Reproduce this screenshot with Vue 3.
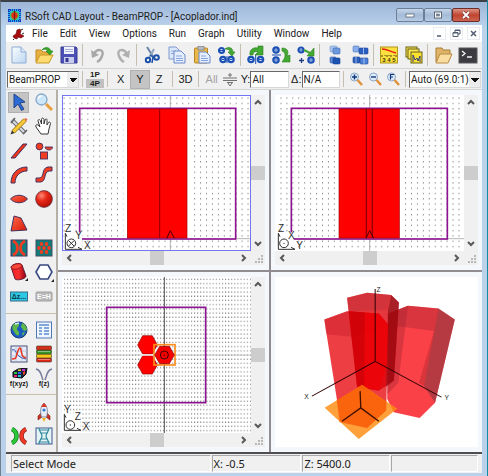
<script setup>
import { ref } from 'vue';

let menus = ref(['File', 'Edit', 'View', 'Options', 'Run', 'Graph', 'Utility', 'Window', 'Help']);

let toolGroups = ref([
    ['new', 'open', 'save'],
    ['undo', 'redo'],
    ['cut', 'copy', 'paste', 'duplicate'],
    ['rotate', 'swap', 'move'],
    ['group', 'ungroup'],
    ['ruler', 'plots'],
    ['folder', 'console'],
]);

let paletteGroups = ref([
    ['select', 'magnify', 'edit', 'hand', 'segment', 'shapes', 'arc', 'sbend', 'lens', 'sphere', 'polygon', '', 'coupler', 'array', 'cylinder', 'hexagon', 'delta', 'eh'],
    ['globe', 'table', 'monitor', 'layers', 'fxyz', 'fz'],
    ['', 'rocket', 'bend', 'grating'],
]);

// lettering drawn on top of some icons
let iconText = {
    ruler: { text: '3 4 5', y: 17, size: 6, fill: '#403808' },
    delta: { text: 'Δz...', y: 13, size: 7, fill: '#103848' },
    eh: { text: 'E=H', y: 13, size: 7, fill: '#ffffff' },
    fxyz: { text: 'f(xyz)', y: 18, size: 7, fill: '#181818' },
    fz: { text: 'f(z)', y: 18, size: 7, fill: '#181818' },
};

let activeTool = ref('select');
let plane = ref('Y');
let program = ref('BeamPROP');
let scale = ref('Auto (69.0:1)');
let cut = ref('All');
let delta = ref('N/A');

let status = ref(['Select Mode', 'X: -0.5', 'Z: 5400.0', '']);
</script>

<template>
    <div class="window">
        <!-- icon sprite -->
        <svg class="sprite" aria-hidden="true">
            <defs>
                <linearGradient id="redGrad" x1="0" y1="0" x2="1" y2="1">
                    <stop offset="0" stop-color="#ff6a4a" />
                    <stop offset="1" stop-color="#d81808" />
                </linearGradient>
                <radialGradient id="ballGrad" cx=".35" cy=".3" r=".8">
                    <stop offset="0" stop-color="#ff8a78" />
                    <stop offset=".4" stop-color="#e82818" />
                    <stop offset="1" stop-color="#a80800" />
                </radialGradient>
                <linearGradient id="pageGrad" x1="0" y1="0" x2="1" y2="1">
                    <stop offset="0" stop-color="#fafdff" />
                    <stop offset="1" stop-color="#bcd6f2" />
                </linearGradient>
                <linearGradient id="cylGrad" x1="0" y1="0" x2="1" y2="0">
                    <stop offset="0" stop-color="#f02020" />
                    <stop offset=".5" stop-color="#f83030" />
                    <stop offset="1" stop-color="#900010" />
                </linearGradient>
                <pattern id="dotsA" x="-7" y="1" width="17.8" height="15.9" patternUnits="userSpaceOnUse">
                    <rect x="0" y="6" width="3" height="3" fill="#5c5c5c" />
                </pattern>
                <pattern id="dotsB" x="-4" y="0" width="9.3" height="12.6" patternUnits="userSpaceOnUse">
                    <rect x="0" y="4" width="3" height="3" fill="#5c5c5c" />
                </pattern>
            </defs>

            <symbol id="i-new" viewBox="0 0 20 20">
                <path d="M3 2h9l5 5v11H3z" fill="url(#pageGrad)" stroke="#90acd4" />
                <path d="M12 2v5h5" fill="#dbe9f8" stroke="#90acd4" />
            </symbol>
            <symbol id="i-open" viewBox="0 0 20 20">
                <path d="M2 17V5h5l2 2h6v3" fill="#e8b040" stroke="#c08a20" />
                <path d="M2 18l4-8h13l-4 8z" fill="#fcdc70" stroke="#c89828" />
                <path d="M8 5c2-3 7-4 9 1h2l-3 4-4-4h2c-1-2-4-2-6-1z" fill="#38a828" stroke="#1c7c18" stroke-width=".6" />
            </symbol>
            <symbol id="i-save" viewBox="0 0 20 20">
                <path d="M2 2h15l1 1v15H2z" fill="#4c50b4" stroke="#383c94" />
                <rect x="5" y="2" width="10" height="7" fill="#f0f2fc" />
                <path d="M6 4.500h8M6 6.500h8" stroke="#a8acd8" />
                <rect x="5" y="12" width="10" height="6" fill="#c8ccec" />
                <rect x="6.500" y="13" width="3" height="4" fill="#34388c" />
            </symbol>
            <symbol id="i-undo" viewBox="0 0 20 20">
                <path d="M6 9c3-6 11-5 8 2-1 3-3 5-5 6" fill="none" stroke="#a8a8a8" stroke-width="2.400" />
                <path d="M3 5l1 8 7-3z" fill="#a8a8a8" />
            </symbol>
            <symbol id="i-redo" viewBox="0 0 20 20">
                <path d="M14 9c-3-6-11-5-8 2 1 3 3 5 5 6" fill="none" stroke="#b0b0b0" stroke-width="2.400" />
                <path d="M17 5l-1 8-7-3z" fill="#b0b0b0" />
            </symbol>
            <symbol id="i-cut" viewBox="0 0 20 20">
                <path d="M5 2l7 11" stroke="#6c84a8" stroke-width="2" />
                <path d="M12 4L7 13" stroke="#90a4c0" stroke-width="2" />
                <circle cx="6" cy="15" r="2.200" fill="none" stroke="#1c50a8" stroke-width="2" />
                <circle cx="14.500" cy="12.500" r="2.300" fill="none" stroke="#1c50a8" stroke-width="2" />
                <path d="M8 10l3 2-1 6" stroke="#1c50a8" stroke-width="1.500" fill="none" />
            </symbol>
            <symbol id="i-copy" viewBox="0 0 20 20">
                <path d="M2 2h7l3 3v9H2z" fill="#dce8fa" stroke="#7c98d0" />
                <path d="M4 6h5M4 8.500h5" stroke="#90acdc" />
                <path d="M7 6h7l4 4v8H7z" fill="#e4eefc" stroke="#6c88c8" />
                <path d="M9 11h6M9 13.500h7M9 15.500h7" stroke="#88a4dc" />
            </symbol>
            <symbol id="i-paste" viewBox="0 0 20 20">
                <rect x="2.500" y="3" width="13" height="15" rx="1" fill="#e8b84c" stroke="#b88420" />
                <rect x="6" y="1.500" width="6" height="3.500" fill="#b8bcc4" stroke="#7c8088" stroke-width=".7" />
                <path d="M7 7h7l4 4v7H7z" fill="#e4eefc" stroke="#6c88c8" />
                <path d="M9 11h5M9 13.500h7M9 15.500h7" stroke="#88a4dc" />
            </symbol>
            <symbol id="i-duplicate" viewBox="0 0 20 20">
                <g fill="#dce8fa" stroke="#1c50b4" stroke-width="2.200">
                    <circle cx="4.500" cy="5.500" r="2.500" />
                    <circle cx="6" cy="14.500" r="2.700" />
                    <circle cx="14" cy="14.500" r="2.700" />
                </g>
                <path d="M3 5.500h3M4.500 14.500h3M12.500 14.500h3M10 11v7" stroke="#1c50b4" />
                <path d="M8 4c4-3 8-1 8 3h2l-3 4-4-4h2c0-2-2-3-5-3z" fill="#44a834" stroke="#28801c" stroke-width=".6" />
            </symbol>
            <symbol id="i-rotate" viewBox="0 0 20 20">
                <g fill="#dce8fa" stroke="#1c50b4" stroke-width="2.200">
                    <circle cx="5" cy="14.500" r="2.700" />
                    <circle cx="14.500" cy="14.500" r="2.700" />
                </g>
                <path d="M9.700 10v9M3.500 14.500h3M13 14.500h3" stroke="#1c50b4" />
                <path d="M4 10c-1-6 4-8 8-7V1h5v9h-8l3-3c-3-1-5 0-5 3z" fill="#44a834" stroke="#28801c" stroke-width=".6" />
            </symbol>
            <symbol id="i-swap" viewBox="0 0 20 20">
                <g fill="#dce8fa" stroke="#1c50b4" stroke-width="2.200">
                    <circle cx="5" cy="5" r="2.700" />
                    <circle cx="5" cy="15" r="2.700" />
                </g>
                <path d="M1 10h9M3.500 5h3M3.500 15h3" stroke="#1c50b4" />
                <path d="M11 3c6 0 7 4 5 8l3-1v7h-8l2-3c2-4 1-7-2-8z" fill="#44a834" stroke="#28801c" stroke-width=".6" />
            </symbol>
            <symbol id="i-move" viewBox="0 0 20 20">
                <g fill="#dce8fa" stroke="#1c50b4" stroke-width="2.200">
                    <circle cx="5" cy="5" r="2.500" />
                    <circle cx="15" cy="15" r="2.700" />
                </g>
                <path d="M3.500 5h3M13.500 15h3" stroke="#1c50b4" />
                <path d="M3 15.500h5M5.500 13v5" stroke="#203c80" stroke-width="1.300" />
                <path d="M8 5l6 3" stroke="#44a834" stroke-width="2" />
                <path d="M18 3v8h-7z" fill="#44a834" stroke="#28801c" stroke-width=".6" />
            </symbol>
            <symbol id="i-group" viewBox="0 0 20 20">
                <rect x="5" y="1" width="7" height="6" rx="1" fill="#a8c4ec" stroke="#7898cc" stroke-width=".6" />
                <rect x="8" y="3" width="7" height="6" rx="1" fill="#6c98dc" stroke="#3c68b4" stroke-width=".6" />
                <rect x="5" y="12" width="6" height="6" rx="1" fill="#5c88d4" stroke="#3460ac" stroke-width=".6" />
                <rect x="8" y="13" width="7" height="6" rx="1" fill="#1c54b4" stroke="#103c8c" stroke-width=".6" />
            </symbol>
            <symbol id="i-ungroup" viewBox="0 0 20 20">
                <rect x="3" y="1" width="6" height="6" rx="1" fill="#88acec" stroke="#5078bc" stroke-width=".6" />
                <rect x="9" y="3" width="9" height="6" rx="1" fill="#2c60c0" stroke="#1c4494" stroke-width=".6" />
                <rect x="3" y="12" width="7" height="6" rx="1" fill="#2c60c0" stroke="#1c4494" stroke-width=".6" />
                <rect x="10" y="13" width="8" height="6" rx="1" fill="#4c80d8" stroke="#1c4494" stroke-width=".6" />
                <path d="M13.500 3v6M14 13v6M6 12v6" stroke="#c4d8f8" stroke-width=".7" />
            </symbol>
            <symbol id="i-ruler" viewBox="0 0 20 20">
                <rect x="1.500" y="2" width="17" height="16" fill="#fce040" stroke="#b09818" />
                <path d="M3 4c6 0 8 3 14 4" stroke="#e82010" stroke-width="1.500" fill="none" />
                <path d="M3 10v2M6 10v1M8 10v2M10 10v1M12 10v2M15 10v1M17 10v2" stroke="#504810" />
            </symbol>
            <symbol id="i-plots" viewBox="0 0 20 20">
                <g stroke="#686010">
                    <rect x="2" y="2" width="11" height="10" fill="#fce858" />
                    <rect x="4" y="4" width="11" height="10" fill="#fce858" />
                    <rect x="7" y="7" width="11" height="11" fill="#fce030" />
                </g>
                <path d="M9 17v-7l2 5 2-2 1 3 2-5v6" fill="none" stroke="#303c80" />
            </symbol>
            <symbol id="i-folder" viewBox="0 0 20 20">
                <path d="M3 17V3h6l1 2h7v5" fill="#e0b468" stroke="#a87c34" />
                <path d="M3 18l4-9h12l-4 9z" fill="#f8dca0" stroke="#b88c44" />
            </symbol>
            <symbol id="i-console" viewBox="0 0 20 20">
                <rect x="1" y="3" width="18" height="15" fill="#3c3c40" stroke="#58585c" />
                <path d="M4 6l3 2.500-3 2.500M9 12h5" fill="none" stroke="#f4f4f4" stroke-width="1.300" />
            </symbol>

            <symbol id="i-zoomin" viewBox="0 0 14 14">
                <circle cx="5.500" cy="5" r="4" fill="#dcecfc" stroke="#8ca4c4" />
                <path d="M8.500 8l4.500 5" stroke="#e09038" stroke-width="2.400" />
                <path d="M3 5h5M5.500 2.500v5" stroke="#103878" stroke-width="1.400" />
            </symbol>
            <symbol id="i-zoomout" viewBox="0 0 14 14">
                <circle cx="5.500" cy="5" r="4" fill="#dcecfc" stroke="#8ca4c4" />
                <path d="M8.500 8l4.500 5" stroke="#e09038" stroke-width="2.400" />
                <path d="M3 5h5" stroke="#103878" stroke-width="1.400" />
            </symbol>
            <symbol id="i-zoomfit" viewBox="0 0 14 14">
                <circle cx="5.500" cy="5" r="4" fill="#dcecfc" stroke="#8ca4c4" />
                <path d="M8.500 8l4.500 5" stroke="#e09038" stroke-width="2.400" />
                <path d="M4.500 7.500v-5H8M4.500 5H7" stroke="#103878" fill="none" stroke-width="1.200" />
            </symbol>

            <symbol id="i-select" viewBox="0 0 20 20">
                <path d="M5 2l11 8-5 1 4 6-2.500 1.500L9 12l-4 4z" fill="#2c6cd4" stroke="#1c3c84" stroke-width=".9" />
            </symbol>
            <symbol id="i-magnify" viewBox="0 0 20 20">
                <circle cx="7.500" cy="7.500" r="5.500" fill="#cce6fa" stroke="#88a8c8" stroke-width="1.300" />
                <path d="M4.500 7c0-2 1-3 3-3" fill="none" stroke="#fff" stroke-width="1.300" />
                <path d="M12 12l6 6" stroke="#e8a040" stroke-width="3" />
            </symbol>
            <symbol id="i-edit" viewBox="0 0 20 20">
                <path d="M3 4l13 13" stroke="#606468" stroke-width="4" />
                <path d="M3 4l13 13" stroke="#d4d8dc" stroke-width="2.400" />
                <path d="M2 7l4-5M14 18l4-4" stroke="#606468" stroke-width="1.600" />
                <path d="M4 16L16 4" stroke="#a07010" stroke-width="4.400" />
                <path d="M4 16L16 4" stroke="#f8cc38" stroke-width="3" />
                <path d="M1.500 18.500l1.500-4 2.500 2.500z" fill="#303030" />
                <path d="M15 3l2-1 1.500 1.500L17 5.500z" fill="#e07050" />
            </symbol>
            <symbol id="i-hand" viewBox="0 0 20 20">
                <path d="M7 18l-5-7c-1-2 1-3 2-2l2 2-2-6c0-2 2-2 2.500 0l1 3V3.500c0-2 2-2 2.500 0V8l1-4c.500-2 2.500-1 2 .500V9l1.500-2.500c1-1 2 0 2 1L15 13l-1 5z" fill="#fff" stroke="#383838" />
            </symbol>
            <symbol id="i-segment" viewBox="0 0 20 20">
                <path d="M2 17L14 3h4L6 17z" fill="#f03418" stroke="#443060" />
            </symbol>
            <symbol id="i-shapes" viewBox="0 0 20 20">
                <g fill="#f03c20" stroke="#443060" stroke-width=".9">
                    <circle cx="5.500" cy="5.500" r="3.400" />
                    <path d="M11 6h7.500c0 4-7 4-7.500 0z" />
                    <rect x="6.500" y="11" width="7" height="7" />
                </g>
            </symbol>
            <symbol id="i-arc" viewBox="0 0 20 20">
                <path d="M2 18C2 9 8 2 18 2v4C11 6 6 11 6 18z" fill="#f03c20" stroke="#443060" />
            </symbol>
            <symbol id="i-sbend" viewBox="0 0 20 20">
                <path d="M2 13h3c6 0 2-10 9-11h4v4h-3c-6 1-2 11-9 11H2z" fill="#f03c20" stroke="#443060" />
            </symbol>
            <symbol id="i-lens" viewBox="0 0 20 20">
                <path d="M1.500 10C6 5 14 5 18.500 10 14 15 6 15 1.500 10z" fill="url(#redGrad)" stroke="#443060" />
            </symbol>
            <symbol id="i-sphere" viewBox="0 0 20 20">
                <circle cx="10" cy="10" r="8.400" fill="url(#ballGrad)" stroke="#503040" stroke-width=".7" />
            </symbol>
            <symbol id="i-polygon" viewBox="0 0 20 20">
                <path d="M2 17L5 2l7 2 6 12z" fill="url(#redGrad)" stroke="#443060" />
            </symbol>
            <symbol id="i-coupler" viewBox="0 0 20 20">
                <rect x="2" y="2" width="16" height="16" fill="#0c7c7c" stroke="#443060" />
                <path d="M4 3c6 3 6 11 0 14M16 3c-6 3-6 11 0 14" fill="none" stroke="#f03c20" stroke-width="2.800" />
            </symbol>
            <symbol id="i-array" viewBox="0 0 20 20">
                <rect x="2" y="2" width="16" height="16" fill="#0c7c7c" stroke="#445060" />
                <g fill="#f03c20">
                    <circle cx="7.500" cy="6" r="1.900" /><circle cx="12.500" cy="6" r="1.900" />
                    <circle cx="5" cy="10" r="1.900" /><circle cx="10" cy="10" r="1.900" /><circle cx="15" cy="10" r="1.900" />
                    <circle cx="7.500" cy="14" r="1.900" /><circle cx="12.500" cy="14" r="1.900" />
                </g>
            </symbol>
            <symbol id="i-cylinder" viewBox="0 0 20 20">
                <path d="M2 5c1-3 9-5 11-2l4 11c0 3-9 5-11 3z" fill="url(#cylGrad)" stroke="#501830" stroke-width=".9" />
                <ellipse cx="7.500" cy="4.500" rx="5.500" ry="2.500" transform="rotate(-14 7.500 4.500)" fill="#f84838" stroke="#901020" stroke-width=".7" />
                <path d="M19 16v3h-3z" fill="#202020" />
            </symbol>
            <symbol id="i-hexagon" viewBox="0 0 20 20">
                <path d="M2 10l4-7h8l4 7-4 7H6z" fill="#fff" stroke="#384880" stroke-width="1.600" />
                <path d="M20 17v3h-3z" fill="#202020" />
            </symbol>
            <symbol id="i-delta" viewBox="0 0 20 20">
                <rect x="1.500" y="6" width="17" height="9" fill="#2cc8e4" stroke="#386c88" />
            </symbol>
            <symbol id="i-eh" viewBox="0 0 20 20">
                <rect x="2" y="6" width="16" height="9" rx="1" fill="#b8b8b8" stroke="#a0a0a0" />
            </symbol>
            <symbol id="i-globe" viewBox="0 0 20 20">
                <circle cx="10" cy="10" r="8" fill="#1c5cc0" stroke="#183c78" />
                <path d="M4 5c3-3 6-2 6 0s-2 2-2 4 3 2 2 5-3 1-4-1-4-4-2-8zM13 3c3 1 5 4 5 7l-3 1-3-4zM13 13l3-1-2 4z" fill="#60b848" />
                <path d="M6 4l4-1" stroke="#d8ecfc" stroke-width="1.300" />
            </symbol>
            <symbol id="i-table" viewBox="0 0 20 20">
                <rect x="2.500" y="2" width="15" height="16" fill="#f0f6fe" stroke="#5078b8" />
                <path d="M5 5h10M5 8h3M5 11h3M5 14h3M10 8h5M10 11h5M10 14h5" stroke="#5c8cd0" stroke-width="1.300" />
            </symbol>
            <symbol id="i-monitor" viewBox="0 0 20 20">
                <rect x="2" y="2" width="16" height="16" fill="#e8ecf8" stroke="#485078" />
                <path d="M2 7h16M2 12h16M7 2v16M13 2v16" stroke="#b0b8d0" stroke-width=".7" />
                <path d="M3 6c2-1 3 0 4 2s3 6 10 7" fill="none" stroke="#3058b8" />
                <path d="M3 15c4 0 4-1 5-5s3-9 4-4 1 7 5 8" fill="none" stroke="#e83820" stroke-width="1.500" />
            </symbol>
            <symbol id="i-layers" viewBox="0 0 20 20">
                <g stroke="#383828" stroke-width=".6">
                    <rect x="2.500" y="14" width="15" height="4" rx="1" fill="#e02818" />
                    <rect x="2.500" y="10" width="15" height="4" rx="1" fill="#f8c818" />
                    <rect x="2.500" y="6" width="15" height="4" rx="1" fill="#389828" />
                    <rect x="2.500" y="2" width="15" height="4" rx="1" fill="#d83018" />
                </g>
                <path d="M4 7.500h12M4 15.500h12" stroke="#fff" stroke-opacity=".4" />
            </symbol>
            <symbol id="i-fxyz" viewBox="0 0 20 20">
                <path d="M4 4l5-3 9-1-1 6-4 4-9-1z" fill="#182038" stroke="#101018" />
                <path d="M5 4h3v2H5z" fill="#30c040" /><path d="M9 4h3v2H9z" fill="#3060f0" />
                <path d="M5 7h3v2H5z" fill="#e82870" /><path d="M9 7h3v2H9z" fill="#28c8c8" />
                <path d="M9 1.500h3V3H9z" fill="#f0d820" /><path d="M13 1h3v2h-3z" fill="#d030d0" /><path d="M14 4l2-1v3l-2 1z" fill="#f04020" />
            </symbol>
            <symbol id="i-fz" viewBox="0 0 20 20">
                <path d="M2 1c5 1 5 6 7 11M18 1c-5 1-5 6-7 11" fill="none" stroke="#787c9c" stroke-width="1.500" />
            </symbol>
            <symbol id="i-rocket" viewBox="0 0 20 20">
                <path d="M7 11l-3 3v4l4-3zM13 11l3 3v4l-4-3z" fill="#d83020" stroke="#702018" stroke-width=".6" />
                <path d="M10 1c4 4 4 9 2.500 14h-5C6 10 6 5 10 1z" fill="#e8eef6" stroke="#707890" stroke-width=".8" />
                <path d="M10 1c1.500 1.500 2.500 3 2.800 4H7.200C7.500 4 8.500 2.500 10 1z" fill="#d83828" />
                <circle cx="10" cy="8" r="1.600" fill="#3878d0" />
                <path d="M8 16h4l-2 4z" fill="#f8b020" />
            </symbol>
            <symbol id="i-bend" viewBox="0 0 20 20">
                <path d="M3 3c6 3 6 11 0 14" fill="none" stroke="#186818" stroke-width="4.500" />
                <path d="M3 3c6 3 6 11 0 14" fill="none" stroke="#28c838" stroke-width="3.200" />
                <path d="M17 3c-6 3-6 11 0 14" fill="none" stroke="#802018" stroke-width="4.500" />
                <path d="M17 3c-6 3-6 11 0 14" fill="none" stroke="#f03828" stroke-width="3.200" />
            </symbol>
            <symbol id="i-grating" viewBox="0 0 20 20">
                <rect x="2" y="2" width="16" height="16" fill="#e4f4f4" stroke="#405890" />
                <path d="M5 2c0 4 3 5 3 8s-3 4-3 8M15 2c0 4-3 5-3 8s3 4 3 8M5 4h10M7 7h6M7 13h6M5 16h10" fill="none" stroke="#30889c" stroke-width="1.200" />
            </symbol>
        </svg>

        <header class="title-bar">
            <svg class="app-icon" viewBox="0 0 13 13">
                <rect width="13" height="13" fill="#28b8e8" />
                <path d="M0 1h13M0 12h13M1 0v13M12 0v13" stroke="#1838c0" stroke-width="2" stroke-dasharray="1 1" />
                <circle cx="6.500" cy="6.500" r="4.500" fill="#48c850" />
                <circle cx="6.500" cy="6.500" r="3.200" fill="#e83018" />
                <path d="M6.500 2v9" stroke="#802010" stroke-width="1.500" />
            </svg>
            <h1 class="title">RSoft CAD Layout - BeamPROP - [Acoplador.ind]</h1>
            <div class="window-buttons">
                <button class="win-btn" aria-label="Minimize">
                    <svg viewBox="0 0 10 8"><rect x="1" y="3" width="8" height="3" fill="#fff" stroke="#5c6878" stroke-width=".8" /></svg>
                </button>
                <button class="win-btn" aria-label="Restore">
                    <svg viewBox="0 0 10 8"><rect x="1.500" y="1" width="7" height="6" fill="#fff" stroke="#5c6878" /><rect x="3.500" y="3" width="3" height="2" fill="#8090a8" stroke="#5c6878" stroke-width=".6" /></svg>
                </button>
                <button class="win-btn close" aria-label="Close">
                    <svg viewBox="0 0 10 8"><path d="M2 1l6 6M8 1L2 7" stroke="#703030" stroke-width="3" /><path d="M2 1l6 6M8 1L2 7" stroke="#fff" stroke-width="1.800" /></svg>
                </button>
            </div>
        </header>

        <nav class="menu-bar">
            <svg class="doc-icon" viewBox="0 0 13 12">
                <path d="M1 8l3-2 1-4 3-1 1 2-1 3 4 2-3 2-3-1-1 2-3-1z" fill="#a80c10" stroke="#600408" stroke-width=".6" />
                <path d="M9 2l2-1M10 6l2-1M2 11l-1 1" stroke="#282828" />
            </svg>
            <button v-for="menu in menus" :key="menu" class="menu-item">{{ menu }}</button>
            <div class="mdi-buttons">
                <button aria-label="Minimize document"><svg viewBox="0 0 9 9"><path d="M2 7h4" stroke="#505c70" stroke-width="1.500" /></svg></button>
                <button aria-label="Restore document"><svg viewBox="0 0 9 9"><path d="M3 3V1h5v4H6M3 1.500h5M1 3.500h5v4H1zM1 4h5" fill="none" stroke="#505c70" /></svg></button>
                <button aria-label="Close document"><svg viewBox="0 0 9 9"><path d="M2 2l5 5M7 2L2 7" stroke="#505c70" stroke-width="1.500" /></svg></button>
            </div>
        </nav>

        <div class="toolbar">
            <div v-for="(group, i) in toolGroups" :key="i" class="tool-group">
                <button v-for="tool in group" :key="tool" class="tool" :aria-label="tool">
                    <svg>
                        <use :href="'#i-' + tool" />
                        <text v-if="iconText[tool]" class="icon-text" x="10" :y="iconText[tool].y" :font-size="iconText[tool].size" :fill="iconText[tool].fill">{{ iconText[tool].text }}</text>
                    </svg>
                </button>
            </div>
        </div>

        <div class="toolbar options-bar">
            <select v-model="program" class="program" aria-label="Program">
                <option>BeamPROP</option>
            </select>
            <i class="sep"></i>
            <button class="panes" aria-label="Panes"><span>1P</span><span class="on">4P</span></button>
            <i class="sep"></i>
            <button v-for="axis in ['X', 'Y', 'Z']" :key="axis" class="axis" :class="{ on: plane === axis }" @click="plane = axis">{{ axis }}</button>
            <i class="sep"></i>
            <button class="axis">3D</button>
            <i class="sep"></i>
            <button class="axis" disabled>All</button>
            <button class="nudge" aria-label="Step">
                <svg viewBox="0 0 14 16"><path d="M7 2v4M5 4h4M0 7h14M0 9.500h14M4 11.500h6M5 12l2 3 2-3" fill="none" stroke="#707070" /></svg>
            </button>
            <label for="cut">Y:</label>
            <input id="cut" v-model="cut" type="text" />
            <label for="delta">Δ:</label>
            <input id="delta" v-model="delta" type="text" />
            <i class="sep"></i>
            <button v-for="z in ['zoomin', 'zoomout', 'zoomfit']" :key="z" class="zoom" :aria-label="z">
                <svg><use :href="'#i-' + z" /></svg>
            </button>
            <i class="sep"></i>
            <select v-model="scale" class="scale" aria-label="Scale">
                <option>Auto (69.0:1)</option>
            </select>
        </div>

        <main class="workspace">
            <aside class="palette">
                <div v-for="(group, i) in paletteGroups" :key="i" class="palette-group" :style="{ flexGrow: group.length }">
                    <template v-for="(tool, j) in group" :key="j">
                        <button v-if="tool" class="pal" :class="{ on: activeTool === tool }" :aria-label="tool" @click="activeTool = tool">
                            <svg>
                                <use :href="'#i-' + tool" />
                                <text v-if="iconText[tool]" class="icon-text" x="10" :y="iconText[tool].y" :font-size="iconText[tool].size" :fill="iconText[tool].fill">{{ iconText[tool].text }}</text>
                            </svg>
                        </button>
                        <span v-else></span>
                    </template>
                </div>
            </aside>

            <div class="views">
                <section v-for="view in ['xz', 'yz', 'xy']" :key="view" class="pane">
                    <div class="canvas" :class="{ focused: view === 'xz' }">
                        <svg v-if="view === 'xz'" viewBox="9 15 561 468">
                            <rect x="0" y="0" width="600" height="500" fill="url(#dotsA)" />
                            <path d="M331 0v500M528 446h60" stroke="#909090" stroke-width="2" />
                            <rect x="190" y="57" width="201" height="388" fill="#fff" />
                            <rect x="59" y="55" width="468" height="392" fill="none" stroke="#8c1490" stroke-width="5" />
                            <rect x="202" y="57" width="179" height="387" fill="#fe0000" stroke="#a00000" stroke-width="2" />
                            <path d="M299 57v387" stroke="#900000" stroke-width="3" />
                            <path d="M320 445l11-23 12 23" fill="none" stroke="#500000" stroke-width="3" />
                            <rect x="12" y="427" width="54" height="53" fill="#fff" />
                            <path d="M16 430v48h50M16 430l5 10M66 478l-12-6" fill="none" stroke="#303030" stroke-width="3" />
                            <circle cx="34" cy="460" r="13" fill="#fff" stroke="#303030" stroke-width="3" />
                            <path d="M26 452l16 16M42 452l-16 16" stroke="#303030" stroke-width="3" />
                            <text class="axis-label" x="15" y="425">Z</text>
                            <text class="axis-label" x="46" y="447">Y</text>
                            <text class="axis-label" x="72" y="477">X</text>
                        </svg>
                        <svg v-else-if="view === 'yz'" viewBox="33 15 561 468">
                            <rect x="33" y="0" width="600" height="500" fill="url(#dotsA)" />
                            <path d="M314 0v500M548 446h60" stroke="#909090" stroke-width="2" />
                            <rect x="212" y="57" width="202" height="388" fill="#fff" />
                            <rect x="79" y="55" width="468" height="392" fill="none" stroke="#8c1490" stroke-width="5" />
                            <rect x="222" y="57" width="181" height="387" fill="#fe0000" stroke="#a00000" stroke-width="2" />
                            <path d="M304 57v387M322 57v387" stroke="#900000" stroke-width="4" />
                            <path d="M303 445l11-23 12 23" fill="none" stroke="#500000" stroke-width="3" />
                            <rect x="35" y="427" width="51" height="53" fill="#fff" />
                            <path d="M40 430v48h50M40 430l5 10M90 478l-12-6" fill="none" stroke="#303030" stroke-width="3" />
                            <circle cx="57" cy="460" r="13" fill="#fff" stroke="#303030" stroke-width="3" />
                            <circle cx="57" cy="460" r="2" fill="#303030" />
                            <text class="axis-label" x="39" y="425">Z</text>
                            <text class="axis-label" x="69" y="447">X</text>
                            <text class="axis-label" x="94" y="477">Y</text>
                        </svg>
                        <svg v-else viewBox="12 36 561 468">
                            <rect x="12" y="36" width="600" height="500" fill="url(#dotsB)" />
                            <path d="M316 36v468" stroke="#505050" stroke-width="3" />
                            <path d="M12 270h561" stroke="#b0b0b0" stroke-width="2" />
                            <rect x="143" y="127" width="297" height="286" fill="none" stroke="#8c1490" stroke-width="5" />
                            <path d="M236 240l15-28h29l15 28-15 27h-29zM236 300l15-28h29l15 28-15 27h-29z" fill="#fe0000" stroke="#900000" stroke-width="2" />
                            <path d="M246 270h40" stroke="#fff" stroke-width="4" />
                            <rect x="285" y="239" width="63" height="61" fill="none" stroke="#ff8c1c" stroke-width="5" />
                            <path d="M287 270l15-26h29l15 26-15 26h-29z" fill="#f40000" stroke="#900000" stroke-width="2" />
                            <circle cx="316" cy="270" r="12" fill="none" stroke="#400000" stroke-width="3" />
                            <circle cx="316" cy="270" r="2" fill="#400000" />
                            <rect x="13" y="445" width="50" height="55" fill="#fff" />
                            <path d="M16 448v48h50M16 448l5 10M66 496l-12-6" fill="none" stroke="#303030" stroke-width="3" />
                            <circle cx="34" cy="480" r="13" fill="#fff" stroke="#303030" stroke-width="3" />
                            <circle cx="34" cy="480" r="2" fill="#303030" />
                            <text class="axis-label" x="15" y="443">Y</text>
                            <text class="axis-label" x="47" y="466">Z</text>
                            <text class="axis-label" x="71" y="496">X</text>
                        </svg>
                    </div>
                    <div class="scroll vertical">
                        <button aria-label="Scroll up"><svg viewBox="0 0 8 6"><path d="M1 5l3-3 3 3" /></svg></button>
                        <span class="thumb"></span>
                        <button aria-label="Scroll down"><svg viewBox="0 0 8 6"><path d="M1 1l3 3 3-3" /></svg></button>
                    </div>
                    <div class="scroll">
                        <button aria-label="Scroll left"><svg viewBox="0 0 6 8"><path d="M5 1L2 4l3 3" /></svg></button>
                        <span class="thumb"></span>
                        <button aria-label="Scroll right"><svg viewBox="0 0 6 8"><path d="M1 1l3 3-3 3" /></svg></button>
                    </div>
                    <svg class="grip" viewBox="0 0 14 14">
                        <path d="M10 5h2M7 8h2M10 8h2M4 11h2M7 11h2M10 11h2" stroke="#b8b8b8" stroke-width="2" />
                    </svg>
                </section>

                <section class="pane solid">
                    <div class="canvas">
                        <svg viewBox="33 36 600 508">
                            <path d="M177 163l68-25 95 7 28 33-6 257-57 52-80-19z" fill="#e80810" fill-opacity=".78" />
                            <path d="M177 163l68-25 95 7 28 33-100 37-85-8z" fill="#c01420" fill-opacity=".35" />
                            <path d="M368 145l59-23 91 8 49 33-59 249-46 45-77-17-20-40z" fill="#f80c14" fill-opacity=".78" />
                            <path d="M518 130l49 33-59 249-33-50z" fill="#70343c" fill-opacity=".5" />
                            <path d="M368 145l59-23 91 8-13 67-105-14-32 30z" fill="#a82430" fill-opacity=".4" />
                            <path d="M505 197l13-67-43 232-15-10z" fill="#a02028" fill-opacity=".35" />
                            <path d="M368 145l59-23-29 230-33 35z" fill="#901c28" fill-opacity=".3" />
                            <path d="M245 98l60-15 72 7 23 22-15 233-45 31-65-10z" fill="#dc0008" fill-opacity=".78" />
                            <path d="M245 98l60-15 72 7-14 43-113 6z" fill="#b82c34" fill-opacity=".4" />
                            <path d="M377 90l23 22-15 233-23 20 5-230z" fill="#780c14" fill-opacity=".55" />
                            <path d="M250 138l90 7 28 33-3 120-25 78-65-14z" fill="#f40004" fill-opacity=".55" />
                            <path d="M250 138l48 3-2 230-21-9z" fill="#b00008" fill-opacity=".4" />
                            <path d="M178 427l112-69 105 72-115 90z" fill="#ff8c10" fill-opacity=".82" />
                            <path d="M214 404l76-46 72 50v27l-57 52-83-17z" fill="#f84400" fill-opacity=".45" />
                            <path d="M329 72v216L140 392M329 288l198 107" fill="none" stroke="#300000" stroke-width="3" />
                            <path d="M284 377l2 50-56 40M286 427l54 40" fill="none" stroke="#401000" stroke-width="4" />
                            <text class="axis-tick" x="333" y="80">Z</text>
                            <text class="axis-tick" x="117" y="402">X</text>
                            <text class="axis-tick" x="536" y="405">Y</text>
                        </svg>
                    </div>
                </section>
            </div>
        </main>

        <footer class="status-bar">
            <span v-for="(cell, i) in status" :key="i" class="cell">{{ cell }}</span>
        </footer>
    </div>
</template>

<style>
body {
    margin: 0;
    background-color: #108ca4;
}
</style>

<style scoped>
.window {
    box-sizing: border-box;
    min-height: 100vh;
    display: flex;
    flex-direction: column;
    margin-right: 1px;
    padding: 0 5px 3px;
    border-top: 2px solid #3c4048;
    border-left: 1px solid #70808c;
    background: linear-gradient(#9db6d8, #bcd3ec 26px, #b9d1ea);
    font-family: 'Noto Sans', sans-serif;
    font-size: 11px;
    color: #202020;
}

button {
    display: flex;
    align-items: center;
    justify-content: center;
    padding: 0;
    border: 0;
    background: none;
    color: inherit;
    font: inherit;
}

.sprite {
    position: absolute;
    width: 0;
    height: 0;
}

.icon-text {
    font-family: 'Liberation Sans', sans-serif;
    font-weight: bold;
    text-anchor: middle;
}

.title-bar {
    display: flex;
    align-items: center;
    height: 23px;
    padding: 0 2px;
}

.app-icon {
    width: 13px;
    height: 13px;
    margin-top: 4px;
}

.title {
    flex: 1;
    margin: 5px 0 0 4px;
    font-family: Roboto, sans-serif;
    font-size: 10px;
    font-weight: 400;
    white-space: nowrap;
}

.window-buttons {
    display: flex;
    margin-top: 3px;
}

.win-btn {
    width: 28px;
    height: 14px;
    border: 1px solid #6c7f98;
    border-radius: 2px;
    background: linear-gradient(#c6d6ea, #a4bad6 50%, #b8cce4);
}

.win-btn.close {
    border-color: #702c28;
    background: linear-gradient(#dc9484, #c04430 50%, #cc6450);
}

.win-btn svg {
    width: 10px;
    height: 8px;
}

.menu-bar {
    display: flex;
    align-items: center;
    height: 17px;
    padding-left: 6px;
    background-color: #fff;
    font-family: Roboto, sans-serif;
    font-size: 10px;
}

.doc-icon {
    width: 13px;
    height: 12px;
    margin-right: 1px;
}

.menu-item {
    padding: 0 6px;
}

.mdi-buttons {
    display: flex;
    gap: 4px;
    margin: 0 2px 0 auto;
}

.mdi-buttons button {
    width: 13px;
    height: 13px;
    border: 1px solid #e8edf4;
}

.mdi-buttons svg {
    width: 9px;
    height: 9px;
}

.toolbar {
    display: flex;
    align-items: center;
    height: 26px;
    background-color: #f0f0f0;
    border-bottom: 1px solid #d4d4d4;
}

.tool-group {
    display: flex;
}

.tool-group + .tool-group {
    margin-left: 1px;
    padding-left: 2px;
    border-left: 1px solid #c4bfb0;
}

.tool {
    width: 25px;
    height: 22px;
}

.tool svg,
.pal svg {
    width: 20px;
    height: 20px;
}

.options-bar {
    height: 20px;
    padding: 0 1px;
    font-family: 'Liberation Sans', sans-serif;
    font-size: 11px;
}

.sep {
    width: 1px;
    height: 16px;
    margin: 0 3px;
    background-color: #c4bfb0;
}

select,
input {
    box-sizing: border-box;
    height: 17px;
    border: 1px solid #d8d8d8;
    border-top-color: #686868;
    border-left-color: #686868;
    border-radius: 0;
    background-color: #fff;
    color: #202020;
    font-family: Roboto, sans-serif;
    font-size: 10px;
    padding: 0 1px;
}

select {
    appearance: none;
    padding: 0 11px 0 1px;
    background-image:
        linear-gradient(45deg, transparent 50%, #101010 50%),
        linear-gradient(-45deg, transparent 50%, #101010 50%),
        linear-gradient(#ececec, #ececec);
    background-size: 4px 4px, 4px 4px, 11px 100%;
    background-position: right 5px top 6px, right 1px top 6px, right 0 top 0;
    background-repeat: no-repeat;
    transform: none;
}

.program {
    width: 74px;
}

.scale {
    flex: 1;
    min-width: 72px;
}

input {
    flex: 0 1 40px;
    min-width: 0;
}

label {
    padding: 0 0 0 2px;
}

.panes {
    flex-direction: column;
    width: 19px;
    height: 18px;
    font-size: 8px;
    font-weight: bold;
    line-height: 9px;
}

.panes span {
    width: 100%;
}

.panes .on {
    background-color: #c0c0c0;
}

.axis {
    width: 20px;
    height: 19px;
}

.axis.on {
    background-color: #c4c4c4;
    box-shadow: inset 0 0 0 1px #b0b0b0;
}

.axis:disabled {
    color: #a4a4a4;
}

.nudge {
    width: 18px;
}

.nudge svg {
    width: 14px;
    height: 16px;
}

.zoom {
    width: 19px;
}

.zoom svg {
    width: 14px;
    height: 14px;
}

.workspace {
    flex: 1;
    display: flex;
    background-color: #f0f0f0;
    border-bottom: 2px solid #504c50;
}

.palette {
    display: flex;
    flex-direction: column;
    width: 50px;
    padding-bottom: 4px;
    border-right: 2px solid #b4b0a8;
}

.palette-group {
    display: grid;
    grid-template-columns: 1fr 1fr;
    grid-auto-rows: 1fr;
    place-items: center;
}

.palette-group + .palette-group {
    margin-top: 4px;
    padding-top: 4px;
    border-top: 1px solid #c8c0a8;
}

.pal {
    width: 21px;
    height: 21px;
}

.pal svg {
    overflow: visible;
}

.pal.on {
    background-color: #c4c4c4;
    box-shadow: inset 0 0 0 1px #b0b0b0;
}

.views {
    flex: 1;
    display: grid;
    grid-template-columns: 1fr 1fr;
    grid-template-rows: 1fr 1fr;
    gap: 2px;
    background-color: #908c90;
}

.pane {
    display: grid;
    grid-template-columns: 1fr 14px;
    grid-template-rows: 1fr 14px;
    min-width: 0;
    min-height: 0;
    padding: 5px 4px;
    background-color: #f4f7fc;
}

.pane.solid {
    display: flex;
}

/* drawings scale to the pane and never push it taller */
.canvas {
    flex: 1;
    display: flex;
    contain: size;
    min-width: 0;
    min-height: 100px;
    background-color: #fff;
    overflow: hidden;
}

.canvas.focused {
    outline: 1px solid #7474f4;
    outline-offset: -1px;
}

.canvas svg {
    flex: 1;
    min-width: 0;
    width: 100%;
}

.axis-label {
    font-family: 'Liberation Sans', sans-serif;
    font-size: 30px;
    fill: #303030;
}

.axis-tick {
    font-family: 'Liberation Sans', sans-serif;
    font-size: 20px;
    fill: #202020;
}

.scroll {
    display: flex;
    align-items: center;
    justify-content: space-between;
    background-color: #f0f0f0;
}

.scroll.vertical {
    flex-direction: column;
}

.scroll button {
    width: 14px;
    height: 14px;
}

.scroll button svg {
    width: 8px;
    height: 8px;
    fill: none;
    stroke: #585858;
    stroke-width: 2;
}

.thumb {
    width: 14px;
    height: 14px;
    background-color: #cdcdcd;
}

.grip {
    width: 14px;
    height: 14px;
    background-color: #f0f0f0;
}

.status-bar {
    display: grid;
    grid-template-columns: 200fr 90fr 88fr 87fr;
    gap: 1px;
    height: 17px;
    padding: 1px 4px 1px 5px;
    background-color: #f0f0f0;
}

.cell {
    padding-left: 1px;
    border: 1px solid #fff;
    border-top-color: #a8a8a8;
    border-left-color: #a8a8a8;
    line-height: 15px;
    white-space: nowrap;
}
</style>
